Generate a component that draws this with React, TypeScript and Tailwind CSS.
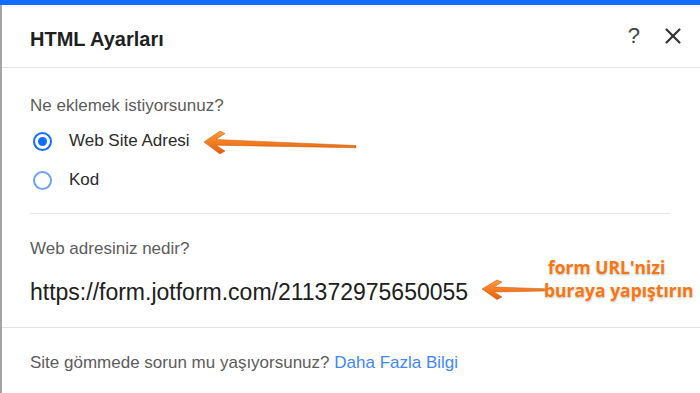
import { X } from "lucide-react";

const font = { fontFamily: '"Liberation Sans", Arial, sans-serif' };

function Radio({ checked, label }: { checked: boolean; label: string }) {
  return (
    <label className="flex h-[30px] items-center gap-[17px]">
      <span
        className={`flex h-[19px] w-[19px] items-center justify-center rounded-full border-2 ${
          checked ? "border-[#116dff]" : "border-[#6ea0ff]"
        }`}
      >
        {checked ? <span className="h-[9px] w-[9px] rounded-full bg-[#116dff]" /> : null}
      </span>
      <span className="text-[17px] text-[#2b2b2b]">{label}</span>
    </label>
  );
}

function LongArrow() {
  return (
    <svg className="pointer-events-none absolute left-[200px] top-[128px]" width="162" height="30" viewBox="0 0 162 30">
      <defs>
        <linearGradient id="a1" x1="0" y1="0" x2="0" y2="1">
          <stop offset="0" stopColor="#ff9a3c" />
          <stop offset="1" stopColor="#e45f06" />
        </linearGradient>
      </defs>
      <polygon
        points="4,14 20,3 25,5.5 16,11.5 156,17.5 156,19.8 16,17.2 25,23 20,26"
        fill="url(#a1)"
        stroke="#c9540a"
        strokeWidth="0.5"
        strokeLinejoin="round"
      />
    </svg>
  );
}

function ShortArrow() {
  return (
    <svg className="pointer-events-none absolute left-[478px] top-[278px]" width="72" height="24" viewBox="0 0 72 24">
      <defs>
        <linearGradient id="a2" x1="0" y1="0" x2="0" y2="1">
          <stop offset="0" stopColor="#ff9a3c" />
          <stop offset="1" stopColor="#e45f06" />
        </linearGradient>
      </defs>
      <polygon
        points="4,11 19,2 24,4 16,9 68,10.8 68,13 16,14 24,19 19,21.5"
        fill="url(#a2)"
        stroke="#c9540a"
        strokeWidth="0.5"
        strokeLinejoin="round"
      />
    </svg>
  );
}

export default function App() {
  return (
    <div className="relative h-[393px] w-[700px] overflow-hidden bg-white" style={font}>
      <div className="h-[5px] bg-[#116dff]" />
      <div className="flex h-[388px] flex-col border-l-2 border-[#a5a5a5]">
        <header className="flex h-[63px] shrink-0 items-center justify-between border-b border-[#dfe3e8] pl-[28px] pr-[14px]">
          <h1 className="mt-[5px] text-[20px] font-bold text-[#1f1f1f]">HTML Ayarları</h1>
          <div className="flex items-center gap-[20px] text-[#333]">
            <span className="text-[22px] leading-none text-[#444]">?</span>
            <X className="h-[26px] w-[26px]" strokeWidth={2} />
          </div>
        </header>

        <section className="px-[28px] pt-[28px]">
          <div className="text-[17px] leading-[20px] text-[#5c5c5c]">Ne eklemek istiyorsunuz?</div>
          <div className="mt-[10px] flex flex-col gap-[9px] pl-[3px]">
            <Radio checked label="Web Site Adresi" />
            <Radio checked={false} label="Kod" />
          </div>
          <div className="mr-[2px] mt-[18px] border-t border-[#e3e6ea]" />
        </section>

        <section className="border-b border-[#dfe3e8] px-[28px] pb-[21px] pt-[25px]">
          <div className="text-[17px] leading-[20px] text-[#5c5c5c]">Web adresiniz nedir?</div>
          <div className="mt-[19px] text-[23px] leading-[28px] text-[#202020]">
            https://form.jotform.com/211372975650055
          </div>
        </section>

        <footer className="px-[28px] pt-[25px] text-[17px] leading-[20px] text-[#5c5c5c]">
          Site gömmede sorun mu yaşıyorsunuz? <span className="text-[#3f86ff]">Daha Fazla Bilgi</span>
        </footer>
      </div>

      <LongArrow />
      <ShortArrow />
      <div
        className="pointer-events-none absolute left-[544px] top-[256px] text-[17.5px] font-bold leading-[23px] text-[#f7760f] [text-shadow:0_0_2px_#fff,0_1px_2px_rgba(0,0,0,0.35)]"
        style={{ fontFamily: '"Open Sans", sans-serif' }}
      >
        <div className="pl-[4px]">form URL'nizi</div>
        <div>buraya yapıştırın</div>
      </div>
    </div>
  );
}
